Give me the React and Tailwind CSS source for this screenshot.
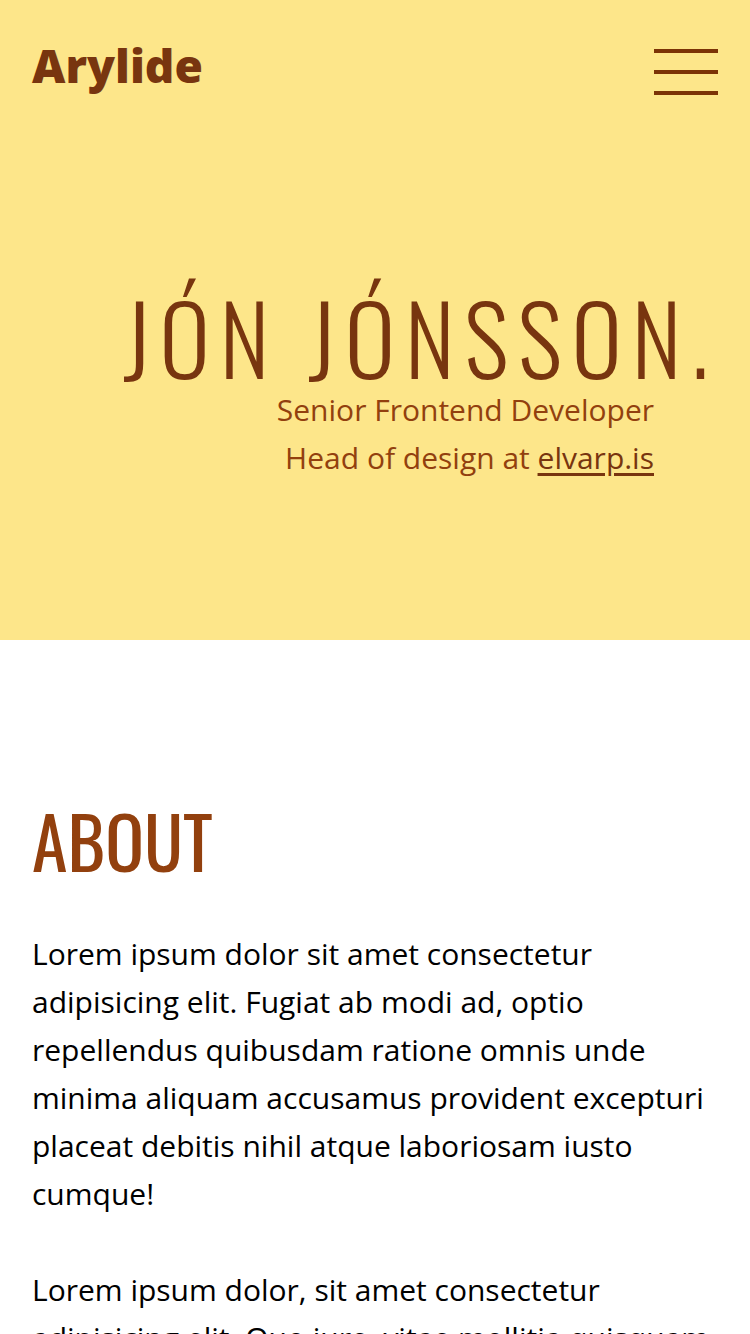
function MenuButton() {
  return (
    <button type="button" aria-label="Open menu" className="flex flex-col gap-[17px]">
      <span className="block h-1 w-16 bg-amber-900" />
      <span className="block h-1 w-16 bg-amber-900" />
      <span className="block h-1 w-16 bg-amber-900" />
    </button>
  );
}

export default function App() {
  return (
    <div className="min-h-screen bg-white font-['Open_Sans',sans-serif] text-[30px] leading-[48px] text-black">
      <header className="bg-[#fde68a] pb-[158px] text-[#78350f]">
        <nav className="flex items-start justify-between px-8 pt-[33px]">
          <a href="#top" className="text-[46px] leading-[64px] font-extrabold">Arylide</a>
          <div className="pt-4">
            <MenuButton />
          </div>
        </nav>
        <div className="mt-[191px] text-right">
          <h1 className="pr-8 font-['Oswald',sans-serif] text-[96px] leading-[96px] font-light tracking-widest whitespace-nowrap">JÓN JÓNSSON.</h1>
          <div className="mt-0.5 pr-24 text-[#92400e]">
            <p>Senior Frontend Developer</p>
            <p>
              Head of design at{" "}
              <a href="#elvarp" className="text-[#78350f] underline decoration-3 underline-offset-4">elvarp.is</a>
            </p>
          </div>
        </div>
      </header>
      <main className="px-8 pt-35">
        <h2 className="font-['Oswald',sans-serif] text-[72px] leading-[120px] text-[#92400e]">ABOUT</h2>
        <p className="mt-[30px]">
          Lorem ipsum dolor sit amet consectetur adipisicing elit. Fugiat ab modi ad, optio repellendus
          quibusdam ratione omnis unde minima aliquam accusamus provident excepturi placeat debitis nihil
          atque laboriosam iusto cumque!
        </p>
        <p className="mt-12">
          Lorem ipsum dolor, sit amet consectetur adipisicing elit. Quo iure, vitae mollitia quisquam
        </p>
      </main>
    </div>
  );
}
